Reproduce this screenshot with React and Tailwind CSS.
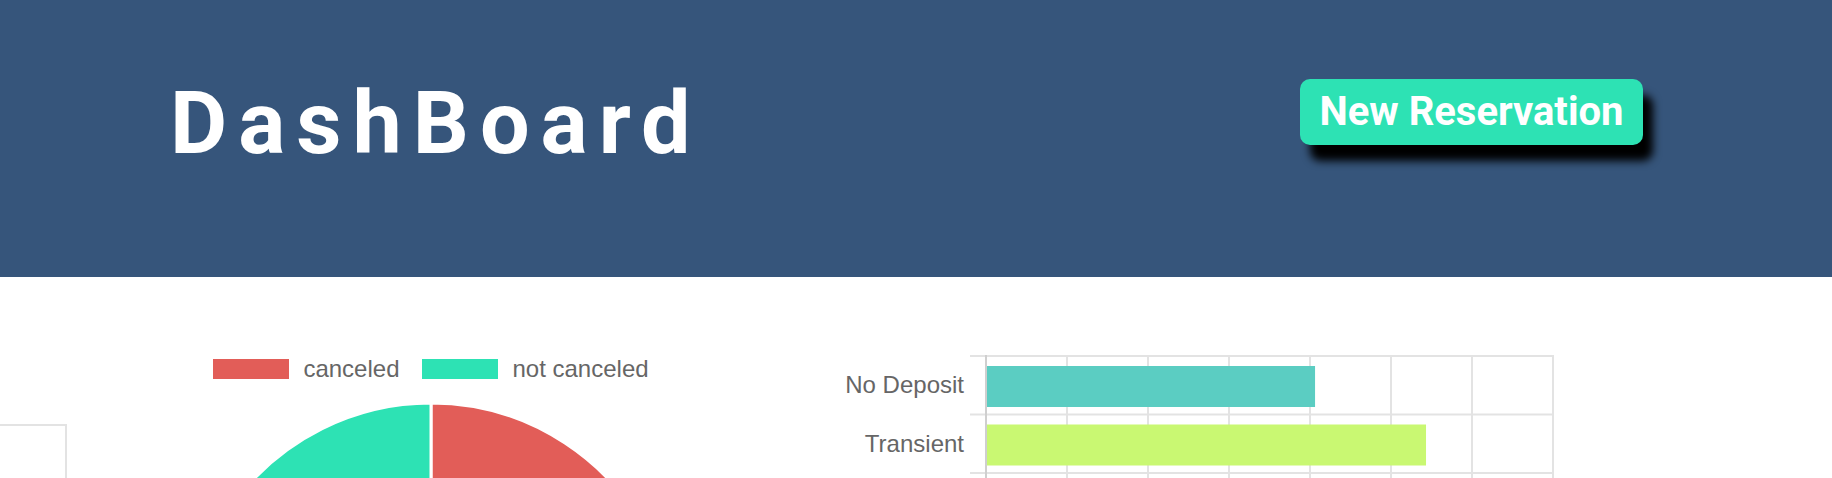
import React from "react";

// Dashboard header with a reservation button, and the two charts below it:
// a cancellation pie and a horizontal bar chart by deposit / customer type.
const pieData = [
  { label: "canceled", value: 37, color: "#e25d58" },
  { label: "not canceled", value: 63, color: "#2de2b4" },
];

const barData = [
  { label: "No Deposit", value: 4.05, color: "#5bcdc2" },
  { label: "Transient", value: 5.42, color: "#c9f872" },
];

const Pie = ({ r = 244 }) => {
  const size = r * 2 + 2;
  const c = size / 2;
  const total = pieData.reduce((s, d) => s + d.value, 0);
  let angle = -Math.PI / 2;
  const slices = pieData.map((d) => {
    const a0 = angle;
    const a1 = angle + (d.value / total) * Math.PI * 2;
    angle = a1;
    const large = a1 - a0 > Math.PI ? 1 : 0;
    const x0 = c + r * Math.cos(a0);
    const y0 = c + r * Math.sin(a0);
    const x1 = c + r * Math.cos(a1);
    const y1 = c + r * Math.sin(a1);
    return {
      ...d,
      path: `M${c} ${c} L${x0} ${y0} A${r} ${r} 0 ${large} 1 ${x1} ${y1} Z`,
    };
  });
  return (
    <svg width={size} height={size} className="block shrink-0">
      {slices.map((s) => (
        <path key={s.label} d={s.path} fill={s.color} stroke="#fff" strokeWidth="3" />
      ))}
    </svg>
  );
};

const BarChart = () => {
  const step = 81;
  const rowH = 58.5;
  const x0 = 16;
  return (
    <div className="flex">
      <div className="w-[144px] flex flex-col">
        {barData.map((d) => (
          <div
            key={d.label}
            className="h-[58.5px] flex items-center justify-end text-[24px] text-[#666] font-['Liberation_Sans',Arial,sans-serif]"
          >
            {d.label}
          </div>
        ))}
      </div>
      <svg width="586" height="140" className="ml-[6px] -mt-px block">
        {[0, 1, 2].map((i) => (
          <line key={"h" + i} x1="0" x2={x0 + step * 7 + 1} y1={1 + i * rowH} y2={1 + i * rowH} stroke="#e3e3e3" strokeWidth="2" />
        ))}
        {[1, 2, 3, 4, 5, 6, 7].map((i) => (
          <line key={"v" + i} x1={x0 + i * step} x2={x0 + i * step} y1="0" y2="140" stroke="#e3e3e3" strokeWidth="2" />
        ))}
        {barData.map((d, i) => (
          <rect key={d.label} x={x0 + 1} y={11 + i * rowH} width={d.value * step} height="41" fill={d.color} />
        ))}
        <line x1={x0} x2={x0} y1="0" y2="140" stroke="#cfcfcf" strokeWidth="2" />
      </svg>
    </div>
  );
};

export default function App() {
  return (
    <div className="w-[1832px] h-[478px] overflow-hidden bg-white">
      <header className="h-[277px] bg-[#36557b] flex items-start justify-between pl-[170px] pr-[189px] pt-[79px]">
        <h1 className="text-[88px] leading-none font-bold tracking-[0.125em] text-white font-['Roboto',sans-serif]">
          DashBoard
        </h1>
        <button className="w-[343px] h-[66px] rounded-[10px] bg-[#2de2b4] text-white text-[40px] font-bold font-['Roboto',sans-serif] flex items-center justify-center shadow-[10px_16px_8px_#000]">
          New Reservation
        </button>
      </header>

      <main className="flex items-start">
        <div className="mt-[147px] w-[67px] h-[60px] border-t-2 border-r-2 border-[#e3e3e3] shrink-0" />

        <section className="w-[728px] shrink-0 flex flex-col items-center pt-[82px]">
          <div className="flex items-center gap-[23px] text-[24px] leading-[20px] text-[#666] font-['Liberation_Sans',Arial,sans-serif]">
            {pieData.map((d) => (
              <div key={d.label} className="flex items-center gap-[14px]">
                <span className="w-[76px] h-[20px] inline-block" style={{ backgroundColor: d.color }} />
                <span>{d.label}</span>
              </div>
            ))}
          </div>
          <div className="mt-[23px]">
            <Pie />
          </div>
        </section>

        <section className="pl-[25px] pt-[79px]">
          <BarChart />
        </section>
      </main>
    </div>
  );
}
